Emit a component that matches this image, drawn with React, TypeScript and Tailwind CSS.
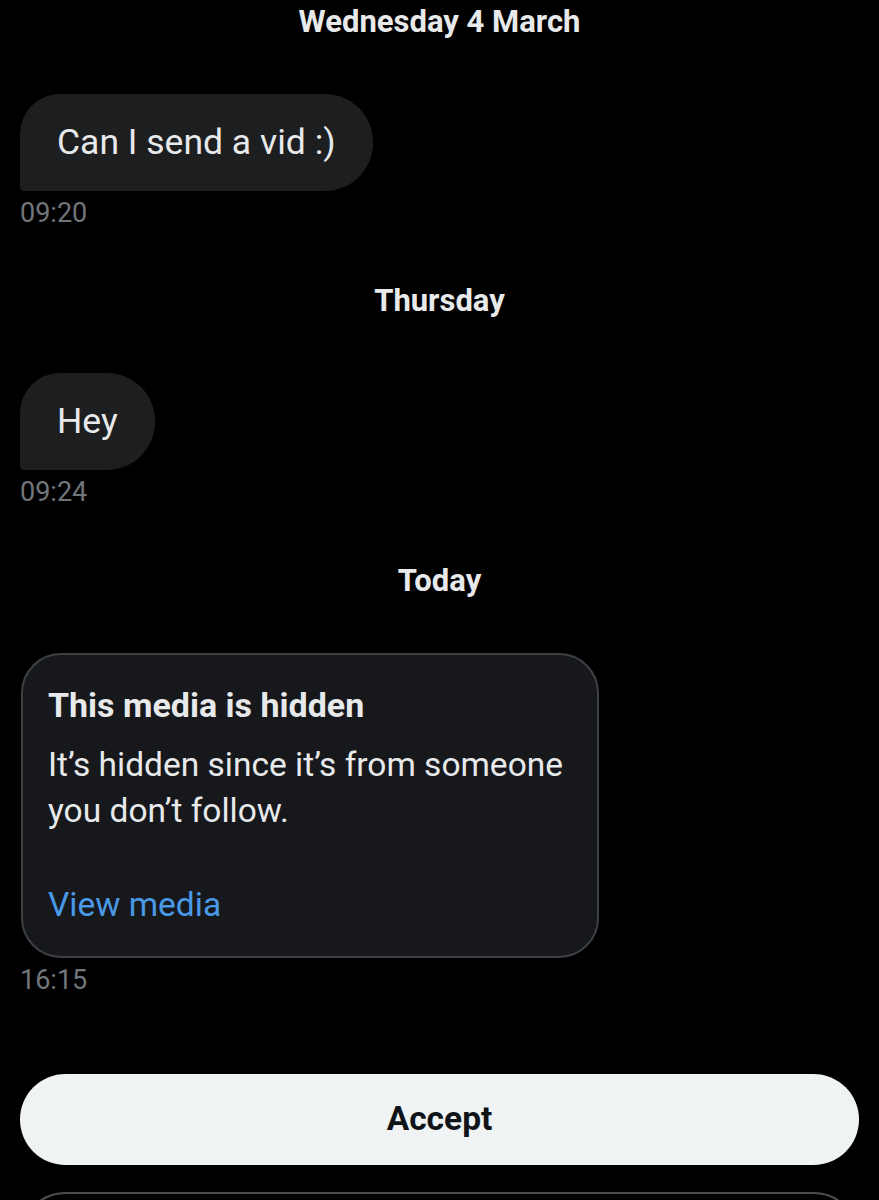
const font = "font-['Roboto',_'Noto_Sans',_sans-serif]";

const DateLabel = ({ label, className = "" }: { label: string; className?: string }) => (
  <div className={`h-[44px] flex items-center justify-center text-[31px] font-bold text-[#e7e9ea] ${className}`}>
    {label}
  </div>
);

const Bubble = ({ text, time }: { text: string; time: string }) => (
  <div className="flex flex-col items-start">
    <div className="h-[97px] flex items-center px-[37px] bg-[#1d1e20] rounded-tl-[40px] rounded-tr-[48px] rounded-br-[48px] rounded-bl-[4px] text-[35.5px] text-[#e7e9ea] whitespace-nowrap">
      {text}
    </div>
    <div className="mt-[8px] h-[28px] leading-[28px] text-[27px] text-[#71767b]">{time}</div>
  </div>
);

export default function App() {
  return (
    <div className={`h-[1200px] overflow-hidden bg-black px-[20px] ${font}`}>
      <DateLabel label="Wednesday 4 March" />
      <div className="mt-[50px]">
        <Bubble text="Can I send a vid :)" time="09:20" />
      </div>
      <DateLabel label="Thursday" className="mt-[52px]" />
      <div className="mt-[50px]">
        <Bubble text="Hey" time="09:24" />
      </div>
      <DateLabel label="Today" className="mt-[53px]" />

      <div className="mt-[50px] flex flex-col items-start">
        <div className="w-[578px] ml-px rounded-[40px] border-2 border-[#3d4044] bg-[#16181c] pl-[25px] pt-[30px] pb-[31px]">
          <div className="h-[40px] leading-[40px] text-[34px] font-bold text-[#e7e9ea] whitespace-nowrap">This media is hidden</div>
          <div className="mt-[17px] leading-[46px] text-[33.5px] text-[#e7e9ea] whitespace-nowrap">
            It’s hidden since it’s from someone
            <br />
            you don’t follow.
          </div>
          <div className="mt-[51px] h-[40px] leading-[40px] text-[33.5px] text-[#4a99e6]">View media</div>
        </div>
        <div className="mt-[8px] h-[28px] leading-[28px] text-[27px] text-[#71767b]">16:15</div>
      </div>

      <button className="mt-[80px] block h-[91px] w-full rounded-full bg-[#eff3f4] text-[33.5px] font-bold text-[#0f1419]">
        Accept
      </button>
      <div className="mt-[27px] h-[91px] w-full rounded-full border-2 border-[#4a4d52] bg-black" />
    </div>
  );
}
